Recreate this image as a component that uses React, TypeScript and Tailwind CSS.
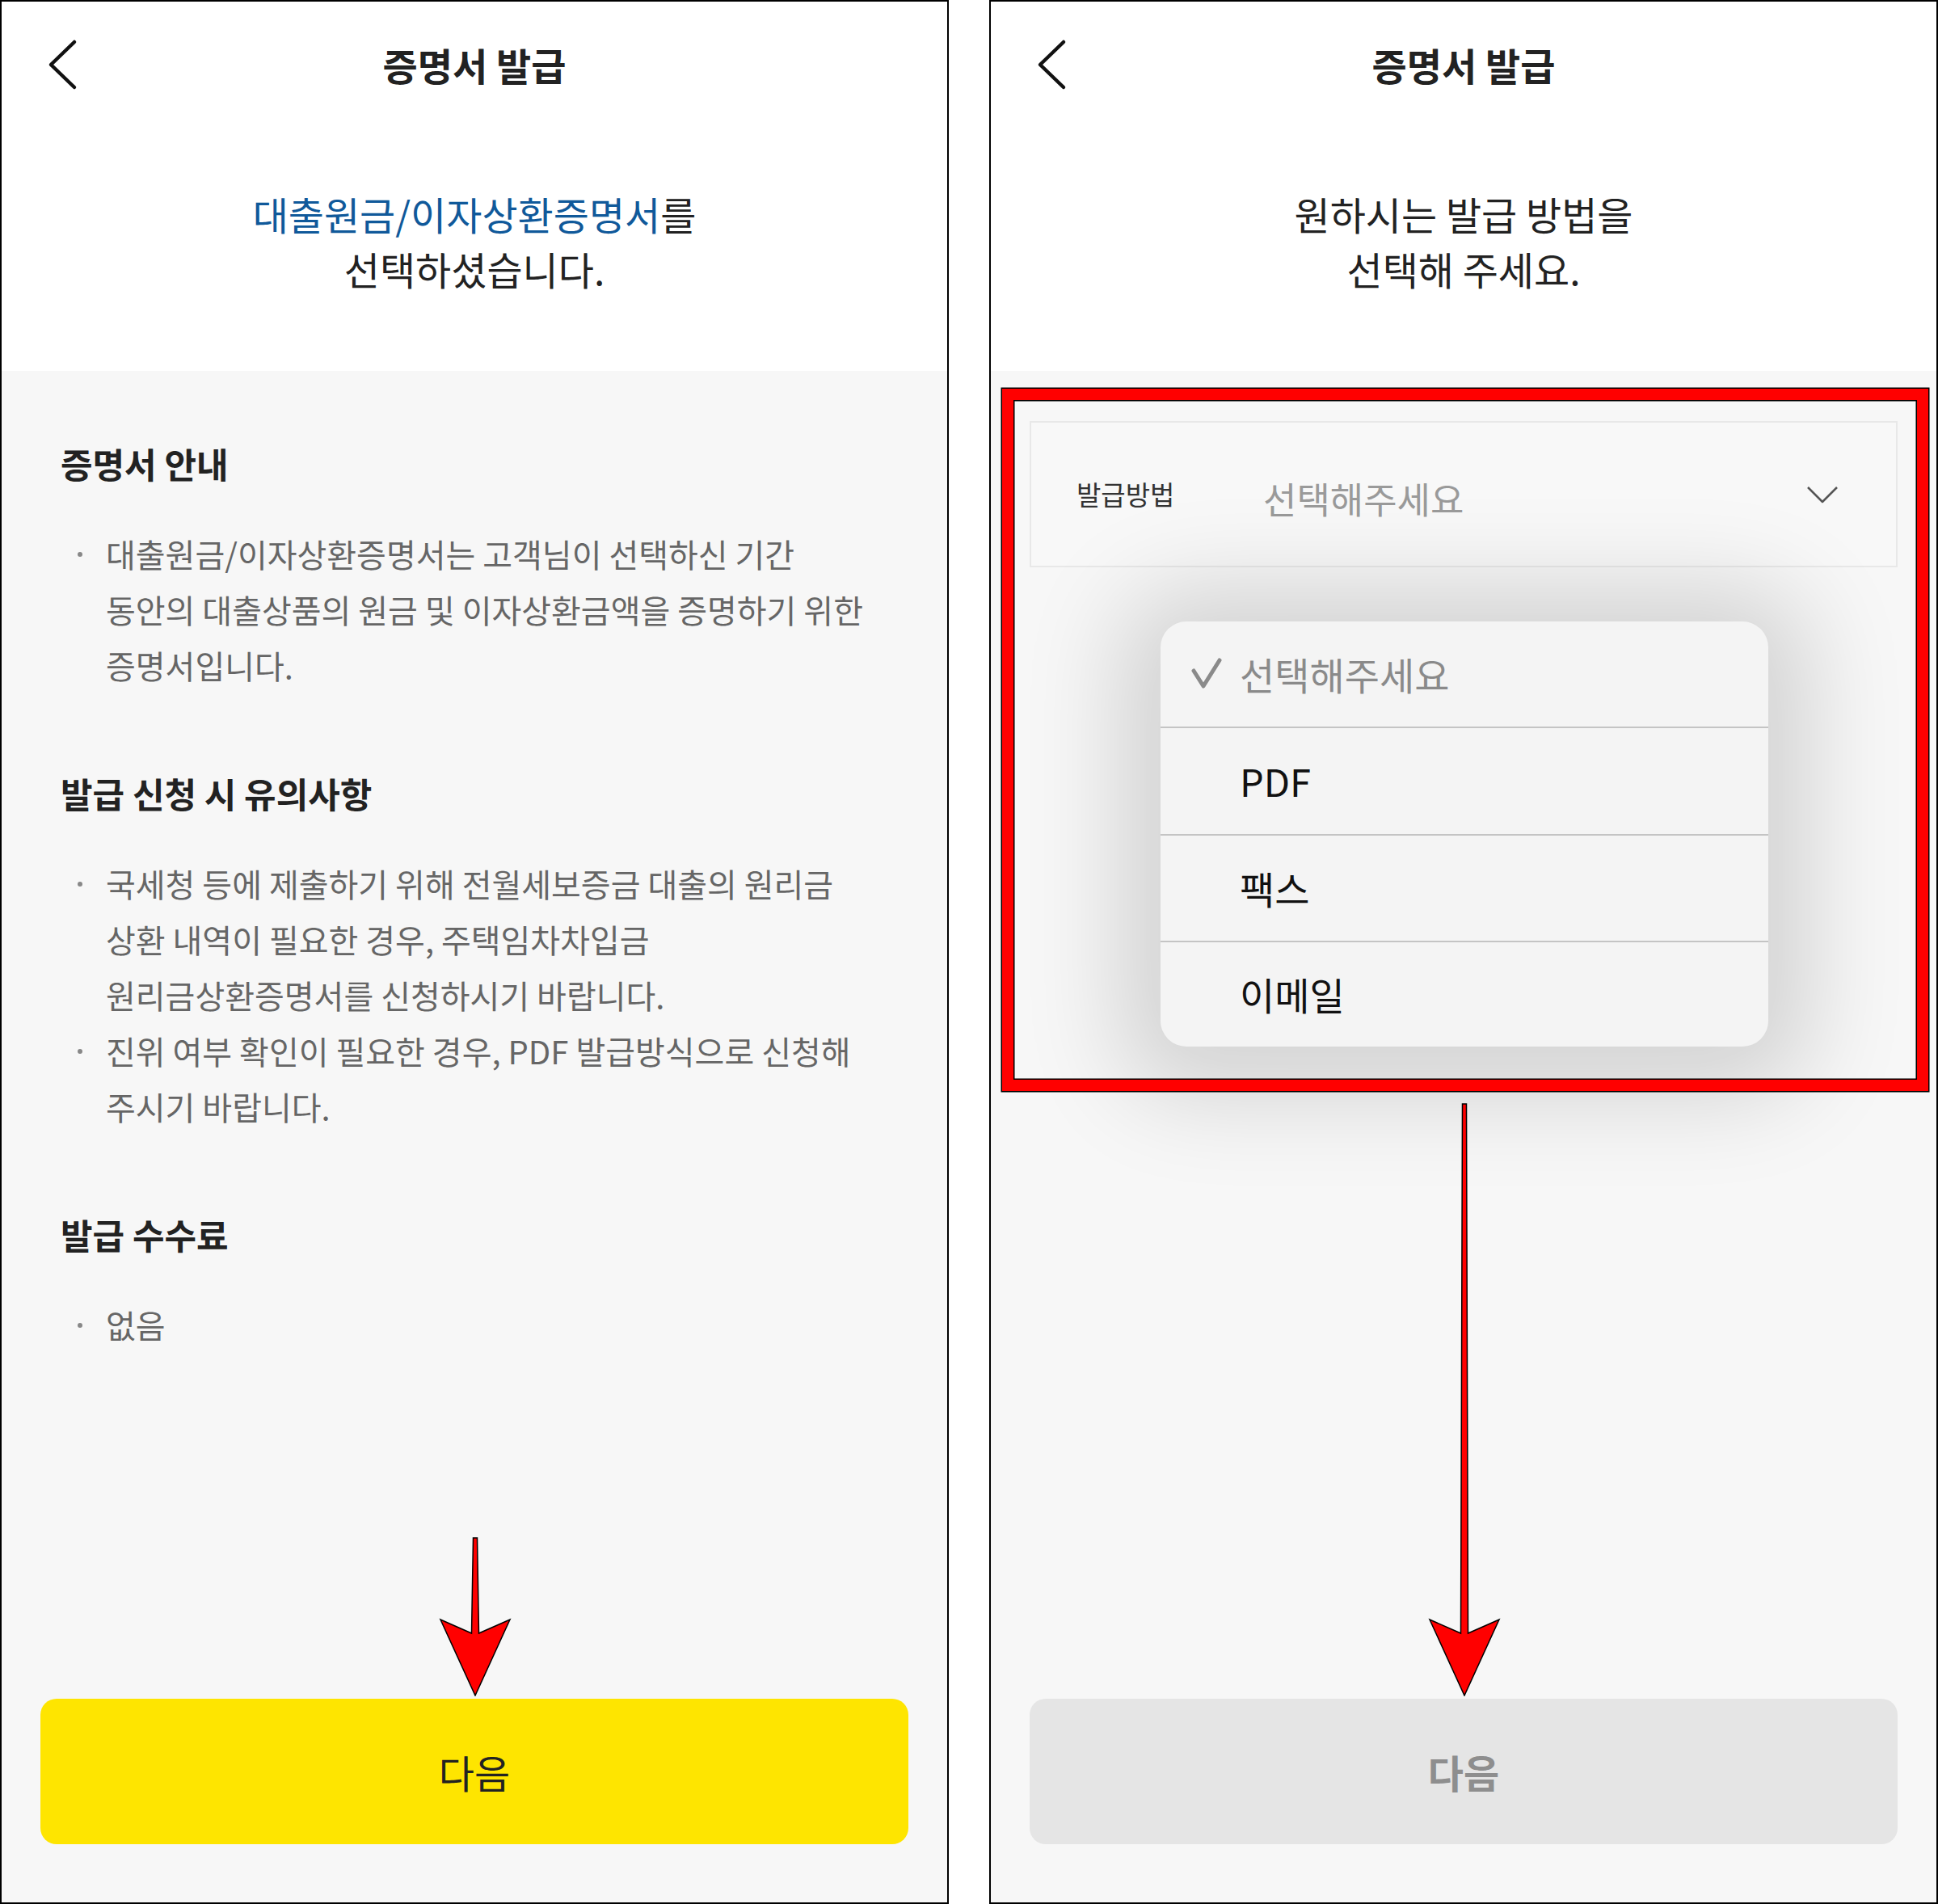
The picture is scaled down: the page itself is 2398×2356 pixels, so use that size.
import React from "react";

// 캡처 두 장을 나란히: 왼쪽은 증명서 안내, 오른쪽은 발급방법 선택 드롭다운
const BackIcon = () => (
    <svg width="40" height="64" viewBox="0 0 40 64" fill="none">
        <polyline points="35,4 6,32 35,60" stroke="#111" strokeWidth="4.5" strokeLinecap="round" strokeLinejoin="round" />
    </svg>
);

const Header: React.FC<{ children: React.ReactNode }> = ({ children }) => (
    <div className="h-[457px] bg-white flex flex-col">
        <div className="h-[156px] px-[55px] flex items-center">
            <div className="w-[40px] shrink-0"><BackIcon /></div>
            <h1 className="flex-1 text-center text-[47px] font-bold text-[#222]">증명서 발급</h1>
            <div className="w-[40px] shrink-0" />
        </div>
        <div className="pt-[72px] text-center text-[48px] leading-[68px] text-[#222]">{children}</div>
    </div>
);

/** 빨간 주석 화살표 (원본 캡처에 그려진 것) */
const RedArrow: React.FC<{ length: number; className: string }> = ({ length, className }) => {
    const L = length;
    const pts = [
        [42.5, 0], [47.5, 0], [49.5, L - 77], [88, L - 94], [45, L], [2, L - 94], [40.5, L - 77],
    ].map(p => p.join(",")).join(" ");
    return (
        <svg width="90" height={L + 2} viewBox={`0 -1 90 ${L + 2}`} className={className}>
            <polygon points={pts} fill="#ff0000" stroke="#000" strokeWidth="1.5" strokeLinejoin="miter" />
        </svg>
    );
};

const Bullet: React.FC<{ lines: string[] }> = ({ lines }) => (
    <li className="flex">
        <span className="w-[56px] shrink-0 pl-[21px] pt-[32px]">
            <span className="block w-[6px] h-[6px] rounded-full bg-[#888]" />
        </span>
        <span className="whitespace-nowrap">
            {lines.map((l, i) => (
                <React.Fragment key={i}>
                    {l}
                    {i < lines.length - 1 && <br />}
                </React.Fragment>
            ))}
        </span>
    </li>
);

const Section: React.FC<{ title: string; items: string[][] }> = ({ title, items }) => (
    <section>
        <h2 className="text-[43px] font-bold leading-[60px] text-[#222]">{title}</h2>
        <ul className="mt-[48px] text-[40px] leading-[69px] text-[#666]">
            {items.map((lines, i) => <Bullet key={i} lines={lines} />)}
        </ul>
    </section>
);

const LeftPanel = () => (
    <div className="relative w-[1174px] h-[2356px] border-2 border-black bg-[#f7f7f7] flex flex-col">
        <Header>
            <span className="text-[#10599a]">대출원금/이자상환증명서</span>를<br />
            선택하셨습니다.
        </Header>

        <div className="px-[73px] pt-[84px] flex flex-col gap-[93px]">
            <Section
                title="증명서 안내"
                items={[[
                    "대출원금/이자상환증명서는 고객님이 선택하신 기간",
                    "동안의 대출상품의 원금 및 이자상환금액을 증명하기 위한",
                    "증명서입니다.",
                ]]}
            />
            <Section
                title="발급 신청 시 유의사항"
                items={[
                    [
                        "국세청 등에 제출하기 위해 전월세보증금 대출의 원리금",
                        "상환 내역이 필요한 경우, 주택임차차입금",
                        "원리금상환증명서를 신청하시기 바랍니다.",
                    ],
                    ["진위 여부 확인이 필요한 경우, PDF 발급방식으로 신청해", "주시기 바랍니다."],
                ]}
            />
            <Section title="발급 수수료" items={[["없음"]]} />
        </div>

        <button className="mt-auto mb-[72px] mx-[48px] h-[180px] rounded-[20px] bg-[#fee500] flex items-center justify-center text-[48px] text-[#222]">
            다음
        </button>

        <RedArrow length={195} className="absolute left-[541px] top-[1900px]" />
    </div>
);

const options = ["PDF", "팩스", "이메일"];

const RightPanel = () => (
    <div className="relative w-[1174px] h-[2356px] border-2 border-black bg-[#f7f7f7] flex flex-col">
        <Header>
            원하시는 발급 방법을<br />
            선택해 주세요.
        </Header>

        <div className="relative flex-1 flex flex-col">
            <div className="mt-[62px] mx-[48px] h-[181px] border-2 border-[#e8e8e8] bg-[#f8f8f8] flex items-center pl-[56px] pr-[71px]">
                <span className="w-[231px] text-[33px] text-[#333]">발급방법</span>
                <span className="flex-1 pt-[10px] text-[45px] text-[#9a9a9a]">선택해주세요</span>
                <svg width="40" height="22" viewBox="0 0 40 22" fill="none">
                    <polyline points="2,2 20,20 38,2" stroke="#555" strokeWidth="2.5" strokeLinejoin="round" />
                </svg>
            </div>

            {/* 열린 선택 목록 */}
            <div className="absolute left-[210px] top-[310px] w-[752px] h-[526px] rounded-[32px] bg-[#f4f4f4] shadow-[0_10px_120px_50px_rgba(0,0,0,0.15)] overflow-hidden flex flex-col text-[47px]">
                <div className="h-[130px] flex items-center pl-[36px] text-[#8a8a8a]">
                    <svg width="40" height="40" viewBox="0 0 40 40" fill="none" className="mr-[22px]">
                        <polyline points="5,16 17,35 37,3" stroke="#8a8a8a" strokeWidth="5" strokeLinecap="round" strokeLinejoin="round" />
                    </svg>
                    선택해주세요
                </div>
                {options.map((o, i) => (
                    <div key={o} className={`${i === 0 ? "h-[133px]" : i === 1 ? "h-[132px]" : "h-[131px]"} border-t-2 border-[#c4c4c4] flex items-center pl-[98px] text-[#111]`}>
                        {o}
                    </div>
                ))}
            </div>

            <button className="mt-auto mb-[72px] mx-[48px] h-[180px] rounded-[20px] bg-[#e5e5e5] flex items-center justify-center text-[48px] font-bold text-[#8e8e8e]">
                다음
            </button>
        </div>

        {/* 빨간 강조 박스 */}
        <div className="absolute left-[14px] top-[479px] w-[1146px] h-[869px] border-[14px] border-[#ff0000] shadow-[0_0_0_1.5px_#000,inset_0_0_0_1.5px_#000]" />
        <RedArrow length={732} className="absolute left-[541px] top-[1363px]" />
    </div>
);

export default function App() {
    return (
        <div className="w-[2398px] h-[2356px] bg-white flex gap-[50px] font-['Noto_Sans_CJK_KR','Noto_Sans',sans-serif]">
            <LeftPanel />
            <RightPanel />
        </div>
    );
}
